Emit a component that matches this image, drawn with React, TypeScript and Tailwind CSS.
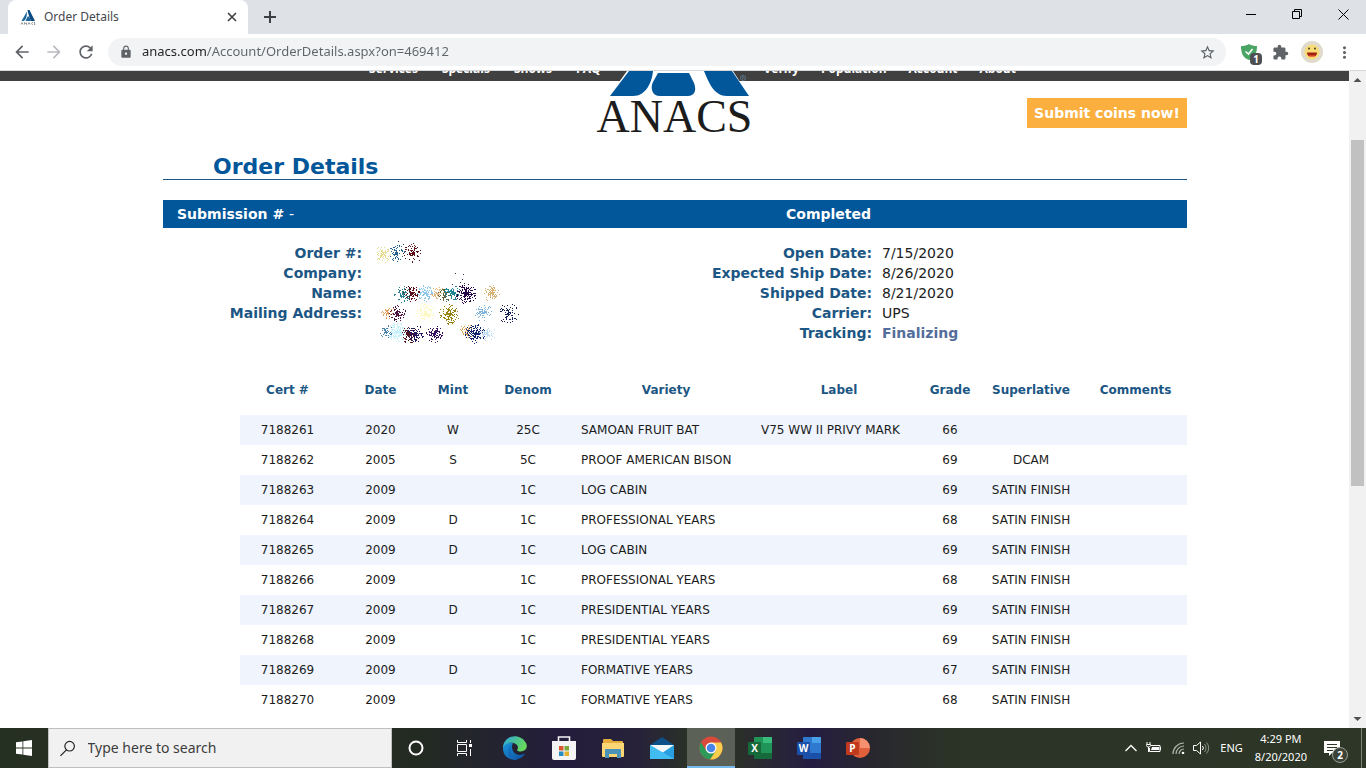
import type { ReactNode } from "react";
import {
  MdArrowBack,
  MdArrowForward,
  MdExtension,
  MdLock,
  MdMoreVert,
  MdRefresh,
  MdStarBorder,
} from "react-icons/md";

type Coin = {
  cert: string;
  date: string;
  mint: string;
  denom: string;
  variety: string;
  label: string;
  grade: string;
  superlative: string;
};

const coins: Coin[] = [
  { cert: "7188261", date: "2020", mint: "W", denom: "25C", variety: "SAMOAN FRUIT BAT", label: "V75 WW II PRIVY MARK", grade: "66", superlative: "" },
  { cert: "7188262", date: "2005", mint: "S", denom: "5C", variety: "PROOF AMERICAN BISON", label: "", grade: "69", superlative: "DCAM" },
  { cert: "7188263", date: "2009", mint: "", denom: "1C", variety: "LOG CABIN", label: "", grade: "69", superlative: "SATIN FINISH" },
  { cert: "7188264", date: "2009", mint: "D", denom: "1C", variety: "PROFESSIONAL YEARS", label: "", grade: "68", superlative: "SATIN FINISH" },
  { cert: "7188265", date: "2009", mint: "D", denom: "1C", variety: "LOG CABIN", label: "", grade: "69", superlative: "SATIN FINISH" },
  { cert: "7188266", date: "2009", mint: "", denom: "1C", variety: "PROFESSIONAL YEARS", label: "", grade: "68", superlative: "SATIN FINISH" },
  { cert: "7188267", date: "2009", mint: "D", denom: "1C", variety: "PRESIDENTIAL YEARS", label: "", grade: "69", superlative: "SATIN FINISH" },
  { cert: "7188268", date: "2009", mint: "", denom: "1C", variety: "PRESIDENTIAL YEARS", label: "", grade: "69", superlative: "SATIN FINISH" },
  { cert: "7188269", date: "2009", mint: "D", denom: "1C", variety: "FORMATIVE YEARS", label: "", grade: "67", superlative: "SATIN FINISH" },
  { cert: "7188270", date: "2009", mint: "", denom: "1C", variety: "FORMATIVE YEARS", label: "", grade: "68", superlative: "SATIN FINISH" },
];

const columns = [
  { name: "Cert #", width: "w-[95px]" },
  { name: "Date", width: "w-[91px]" },
  { name: "Mint", width: "w-[54px]" },
  { name: "Denom", width: "w-[96px]" },
  { name: "Variety", width: "w-[180px]" },
  { name: "Label", width: "w-[166px]" },
  { name: "Grade", width: "w-[56px]" },
  { name: "Superlative", width: "w-[106px]" },
  { name: "Comments", width: "w-auto" },
];

const shipping = [
  { label: "Open Date:", value: "7/15/2020" },
  { label: "Expected Ship Date:", value: "8/26/2020" },
  { label: "Shipped Date:", value: "8/21/2020" },
  { label: "Carrier:", value: "UPS" },
];

// x, y, spread, dots, colour
const sprays: [number, number, number, number, string][] = [
  [12, 14, 5, 80, "#e6dc94"],
  [26, 13, 5, 80, "#245f8f"],
  [42, 13, 6, 90, "#5c1018"],
  [55, 73, 6, 160, "#fdf9c4"],
  [27, 92, 6, 200, "#c4f0fb"],
  [32, 54, 5, 80, "#2b8090"],
  [41, 53, 5, 90, "#5a1018"],
  [55, 53, 5, 100, "#8cc8ec"],
  [67, 53, 4, 50, "#e0b67c"],
  [74, 55, 4, 60, "#60603a"],
  [82, 53, 5, 110, "#1f8696"],
  [96, 53, 6, 160, "#2a0648"],
  [121, 53, 5, 100, "#d6b272"],
  [17, 72, 4, 50, "#e0a060"],
  [27, 73, 5, 90, "#4c1440"],
  [79, 74, 6, 150, "#978410"],
  [113, 72, 5, 80, "#7fb4e0"],
  [138, 73, 6, 80, "#142058"],
  [16, 91, 4, 50, "#4a84a8"],
  [39, 94, 5, 110, "#541420"],
  [45, 93, 5, 100, "#201860"],
  [64, 94, 5, 110, "#38105c"],
  [97, 90, 4, 50, "#dca450"],
  [105, 93, 6, 160, "#10246c"],
  [117, 93, 5, 70, "#bcdcf6"],
];

const sprayPaths = (() => {
  let seed = 7;
  const next = () => {
    seed = (seed * 16807) % 2147483647;
    return seed / 2147483647;
  };
  return sprays.map(([x, y, spread, dots, color]) => {
    let d = "";
    for (let i = 0; i < dots; i++) {
      const angle = next() * Math.PI * 2;
      const r = Math.pow(next(), 1.2) * spread * 1.7;
      const px = Math.round(x + Math.cos(angle) * r);
      const py = Math.round(y + Math.sin(angle) * r);
      d += `M${px} ${py}h1v1h-1z`;
    }
    return { d, color };
  });
})();

function RedactedDetails() {
  return (
    <svg width="150" height="105" viewBox="0 0 150 105" shapeRendering="crispEdges" aria-hidden="true">
      {sprayPaths.map((s, i) => (
        <path key={i} d={s.d} fill={s.color} />
      ))}
      <path
        d="M28 1h1v1h-1zM33 4h1v1h-1zM38 6h1v1h-1zM85 33h1v1h-1zM93 34h1v1h-1zM92 39h1v1h-1zM90 42h1v1h-1zM94 43h1v1h-1zM82 44h1v1h-1z"
        fill="#3b2a4e"
      />
    </svg>
  );
}

function Favicon() {
  return (
    <svg width="16" height="16" viewBox="0 0 16 16" aria-hidden="true">
      <path d="M7.500 1h2L15 12h-4C9.500 9 8.800 6 8 3.500z" fill="#0a4a80" />
      <path d="M7 2.500C7 6 6.500 11 3.500 12H1.500zM7.600 7.500h1.600L11 12H5.500z" fill="#1c679c" />
      <path d="M1 15.500l1-2 1 2M4.500 15.500v-2l2 2v-2M8 15.500l1-2 1 2M13 13.500c-2 0-2 2 0 2M15 13.500h-1l1 2h-1" stroke="#6b7478" strokeWidth=".7" fill="none" />
    </svg>
  );
}

function Logo() {
  return (
    <a href="#home" aria-label="ANACS home" className="absolute left-1/2 top-0 flex w-[170px] -translate-x-1/2 flex-col items-center">
      <svg width="170" height="26" viewBox="0 0 170 26" aria-hidden="true">
        <path d="M37 0H143L159 25H19z" fill="#fff" />
        <path d="M39 0H63C62 11 56 25 43 25H20z" fill="#02569a" />
        <path d="M68 2H99L104 12C107 20 104 25 98 25H70C62 25 60 17 63 11z" fill="#02569a" />
        <path d="M114 0H142L159 25H137C124 25 119 12 114 0z" fill="#02569a" />
        <circle cx="153" cy="7" r="2.500" fill="none" stroke="#5d7386" />
        <path d="M152.500 8.500v-3h1v1.500l1 1.500" fill="none" stroke="#5d7386" strokeWidth=".6" />
      </svg>
      <span className="font-['Liberation_Serif',serif] text-[46px] leading-10 text-[#1c1c1c]">ANACS</span>
    </a>
  );
}

function BrowserChrome() {
  return (
    <header className="font-['Noto_Sans',sans-serif]">
      <div className="flex h-[34px] bg-[#dee1e6] pl-2">
        <div className="flex w-60 items-center rounded-t-lg bg-white pl-3 pr-2.5">
          <Favicon />
          <span className="ml-2 flex-1 text-xs text-[#45484c]">Order Details</span>
          <button aria-label="Close tab" className="p-px">
            <svg width="10" height="10" viewBox="0 0 10 10" stroke="#3c4043" strokeWidth="1.600">
              <path d="M1 1l8 8M9 1l-8 8" />
            </svg>
          </button>
        </div>
        <button aria-label="New tab" className="ml-4 text-[#3c4043]">
          <svg width="12" height="12" viewBox="0 0 12 12" stroke="currentColor" strokeWidth="2">
            <path d="M6 0v12M0 6h12" />
          </svg>
        </button>
        <div className="ml-auto flex h-7 items-center text-black">
          <button aria-label="Minimize" className="flex w-[46px] justify-center">
            <svg width="10" height="10" viewBox="0 0 10 10" stroke="currentColor" shapeRendering="crispEdges">
              <path d="M0 5.500h10" />
            </svg>
          </button>
          <button aria-label="Restore" className="flex w-[46px] justify-center">
            <svg width="10" height="10" viewBox="0 0 10 10" fill="none" stroke="currentColor">
              <path d="M.5 2.500h7v7h-7zM2.500 2.500v-2h7v7h-2" />
            </svg>
          </button>
          <button aria-label="Close" className="flex w-[46px] justify-center">
            <svg width="11" height="11" viewBox="0 0 11 11" stroke="currentColor">
              <path d="M.5.5l10 10M10.500.5l-10 10" />
            </svg>
          </button>
        </div>
      </div>
      <div className="flex h-[37px] items-center border-b border-[#d5d8db] bg-white pl-3 pr-3 text-[#5f6368]">
        <button aria-label="Back">
          <MdArrowBack size={20} />
        </button>
        <button aria-label="Forward" className="ml-3 text-[#b9bbbe]">
          <MdArrowForward size={20} />
        </button>
        <button aria-label="Reload" className="ml-3">
          <MdRefresh size={20} />
        </button>
        <div className="ml-3 flex h-7 flex-1 items-center rounded-full bg-[#f1f3f4] pl-[11px] pr-2.5">
          <MdLock size={14} />
          <input
            aria-label="Address"
            defaultValue="anacs.com/Account/OrderDetails.aspx?on=469412"
            className="ml-[9px] flex-1 bg-[linear-gradient(to_right,#202124_64px,#5f6368_64px)] bg-clip-text text-[13px] text-transparent outline-none"
          />
          <button aria-label="Bookmark">
            <MdStarBorder size={17} />
          </button>
        </div>
        <button aria-label="Protection" className="relative ml-[15px]">
          <svg width="16" height="18" viewBox="0 0 16 18">
            <path d="M8 1C5.500 2.500 3 3 0 3c0 7 2 12 8 14 6-2 8-7 8-14-3 0-5.500-.5-8-2z" fill="#4aa564" />
            <path d="M4.500 8.500L7.500 11l4-5" fill="none" stroke="#fff" strokeWidth="1.600" />
          </svg>
          <span className="absolute left-[9px] top-[10px] h-3 w-3 rounded-sm bg-[#4d4f52] text-center text-[10px] font-bold leading-3 text-white">1</span>
        </button>
        <button aria-label="Extensions" className="ml-[15px]">
          <MdExtension size={17} />
        </button>
        <button aria-label="Profile" className="ml-3">
          <svg width="22" height="22" viewBox="0 0 22 22">
            <circle cx="11" cy="11" r="11" fill="#dfdacd" />
            <circle cx="11" cy="11" r="7.500" fill="#f7dc78" />
            <path d="M6 11.500h10c0 6-10 6-10 0z" fill="#a51e12" />
            <path d="M8 14.500h6l-1 1.500H9z" fill="#ef6a3c" />
            <circle cx="8" cy="7.500" r="1" fill="#4a3a1c" />
            <circle cx="14" cy="7.500" r="1" fill="#4a3a1c" />
          </svg>
        </button>
        <button aria-label="Menu" className="ml-3">
          <MdMoreVert size={19} />
        </button>
      </div>
    </header>
  );
}

function Scrollbar() {
  return (
    <div className="flex w-[17px] shrink-0 flex-col items-center bg-[#f1f1f1]" aria-hidden="true">
      <svg width="17" height="17" viewBox="0 0 17 17">
        <path d="M4.500 11h8l-4-4z" fill="#505050" />
      </svg>
      <div className="grow-[52]" />
      <div className="w-[13px] grow-[346] bg-[#c1c1c1]" />
      <div className="grow-[225]" />
      <svg width="17" height="17" viewBox="0 0 17 17">
        <path d="M4.500 6h8l-4 4z" fill="#505050" />
      </svg>
    </div>
  );
}

function OrderPage() {
  return (
    <main className="relative flex-1 overflow-hidden bg-white">
      {/* page is scrolled down, only the bottom of the menu stays in view */}
      <nav className="-mt-[30px] flex h-10 justify-center bg-[#404040] pl-9 pt-4 font-['Open_Sans',sans-serif] text-xs font-bold leading-5 text-white">
        <div className="flex items-center gap-6">
          <a href="#services">Services</a>
          <a href="#specials">Specials</a>
          <a href="#shows">Shows</a>
          <a href="#faq">FAQ</a>
        </div>
        <div className="w-[163px]" />
        <div className="flex items-center gap-[22px]">
          <a href="#verify">Verify</a>
          <a href="#population">Population</a>
          <a href="#account">Account</a>
          <a href="#about">About</a>
        </div>
      </nav>
      <Logo />

      <div className="pl-px font-['DejaVu_Sans',sans-serif]">
        <div className="mx-auto max-w-[1024px]">
          <div className="flex justify-end pt-[17px]">
            <button className="h-[30px] w-40 bg-[#fbaf3f] text-sm font-bold text-white">Submit coins now!</button>
          </div>
          <h1 className="mt-[26px] border-b border-[#1d5683] pl-[50px] text-[22px] font-bold leading-[25px] text-[#02569a]">Order Details</h1>

          <section className="mt-5 text-sm">
            <div className="flex h-7 items-center bg-[#02569a] pl-3.5 font-bold text-white">
              <h2 className="w-[609px]">
                Submission # <span className="font-normal">-</span>
              </h2>
              <span>Completed</span>
            </div>

            <div className="mt-[15px] flex leading-5">
              <div className="w-[199px] text-right font-bold text-[#1b5684]">
                <p>Order #:</p>
                <p>Company:</p>
                <p>Name:</p>
                <p>Mailing Address:</p>
              </div>
              <div className="-mt-[3px] ml-2 h-[103px]">
                <RedactedDetails />
              </div>
              <dl className="ml-[152px] grid h-[100px] grid-cols-[200px_auto] gap-x-2.5">
                {shipping.map((row) => (
                  <div key={row.label} className="contents">
                    <dt className="text-right font-bold text-[#1b5684]">{row.label}</dt>
                    <dd className="text-[#222]">{row.value}</dd>
                  </div>
                ))}
                <dt className="text-right font-bold text-[#1b5684]">Tracking:</dt>
                <dd>
                  <a href="#tracking" className="font-bold text-[#536e9c]">
                    Finalizing
                  </a>
                </dd>
              </dl>
            </div>
          </section>

          <div className="mt-[22px] pl-[77px]">
            <table className="w-full table-fixed text-xs text-[#1c1c1c]">
              <thead>
                <tr className="h-[50px] text-[#1b5684]">
                  {columns.map((c) => (
                    <th key={c.name} scope="col" className={`${c.width} p-0 text-center font-bold`}>
                      {c.name}
                    </th>
                  ))}
                </tr>
              </thead>
              <tbody className="text-center">
                {coins.map((coin) => (
                  <tr key={coin.cert} className="h-[30px] odd:bg-[#eff4fd]">
                    <td>{coin.cert}</td>
                    <td>{coin.date}</td>
                    <td>{coin.mint}</td>
                    <td>{coin.denom}</td>
                    <td className="whitespace-nowrap pl-[5px] text-left">{coin.variety}</td>
                    <td className="whitespace-nowrap pl-[5px] text-left">{coin.label}</td>
                    <td>{coin.grade}</td>
                    <td>{coin.superlative}</td>
                    <td />
                  </tr>
                ))}
              </tbody>
            </table>
          </div>
        </div>
      </div>
    </main>
  );
}

function TaskButton({ name, active, children }: { name: string; active?: boolean; children: ReactNode }) {
  return (
    <button
      aria-label={name}
      className={`flex h-10 w-12 items-center justify-center ${active ? "border-b-2 border-[#76b9ed] bg-[#5b6157] pt-0.5" : ""}`}
    >
      {children}
    </button>
  );
}

function OfficeIcon({ letter, dark, mid, light }: { letter: string; dark: string; mid: string; light: string }) {
  return (
    <svg width="24" height="22" viewBox="0 0 24 22">
      {letter === "P" ? (
        <>
          <circle cx="14" cy="11" r="10" fill={mid} />
          <path d="M14 1a10 10 0 0 1 10 10H14z" fill={light} />
        </>
      ) : (
        <>
          <rect x="6" y="0" width="18" height="22" rx="1" fill={mid} />
          <path d="M15 0h8q1 0 1 1v5h-9z" fill={light} />
          <path d="M6 16h18v5q0 1-1 1H7q-1 0-1-1z" fill={dark} />
        </>
      )}
      <rect x="0" y="5" width="13" height="13" rx="1" fill={dark} />
      <text x="6.500" y="15" textAnchor="middle" fontSize="10" fontWeight="700" fontFamily="Open Sans, sans-serif" fill="#fff">
        {letter}
      </text>
    </svg>
  );
}

function Taskbar() {
  return (
    <footer className="flex h-10 shrink-0 items-center bg-[linear-gradient(to_right,#263022_0px,#232a22_420px,#241d3c_560px,#27223a_640px,#2a3226_690px,#2b2f2a_740px,#251d42_810px,#28272f_870px,#2b3326_950px,#2d3627_1366px)] font-['Noto_Sans',sans-serif] text-white">
      <button aria-label="Start" className="flex h-10 w-12 items-center justify-center">
        <svg width="16" height="16" viewBox="0 0 16 16" fill="#fff">
          <path d="M0 2.300L6.500 1.400V7.600H0zM7.300 1.300L16 0V7.600H7.300zM0 8.400H6.500V14.600L0 13.700zM7.300 8.400H16V16L7.300 14.700z" />
        </svg>
      </button>
      <label className="flex h-10 w-[344px] items-center border border-[#bfbfbf] bg-[#f1f1f1] pl-[11px]">
        <svg width="17" height="17" viewBox="0 0 17 17" fill="none" stroke="#222" strokeWidth="1.300">
          <circle cx="10.500" cy="6" r="5.200" />
          <path d="M7 10L.5 16.500" />
        </svg>
        <input
          aria-label="Type here to search"
          placeholder="Type here to search"
          className="ml-3 w-full bg-transparent text-sm outline-none placeholder:text-[#3c3c3c]"
        />
      </label>
      <TaskButton name="Cortana">
        <svg width="16" height="16" viewBox="0 0 16 16">
          <circle cx="8" cy="8" r="6.500" fill="none" stroke="#fff" strokeWidth="2" />
        </svg>
      </TaskButton>
      <TaskButton name="Task View">
        <svg width="17" height="16" viewBox="0 0 17 16" fill="none" stroke="#fff">
          <path d="M1.500 0v2.500h9V0M1.500 16v-2.500h9V16M1.500 4.500h9v7h-9zM14.500 0v3M14.500 9v7" />
          <path d="M13 4h3v3h-3z" fill="#fff" stroke="none" />
        </svg>
      </TaskButton>
      <div className="ml-[3px] flex gap-px">
        <TaskButton name="Microsoft Edge">
          <svg width="24" height="24" viewBox="0 0 24 24">
            <defs>
              <linearGradient id="edgeTop" x1="0" y1="0" x2="1" y2=".4">
                <stop offset="0" stopColor="#2aa5e0" />
                <stop offset="1" stopColor="#66d85c" />
              </linearGradient>
              <linearGradient id="edgeBase" x1="0" y1="0" x2="1" y2="1">
                <stop offset="0" stopColor="#1b96dc" />
                <stop offset="1" stopColor="#0d4f9c" />
              </linearGradient>
            </defs>
            <path d="M0 12C1 6 6 6 10 7c-2 3-1 9 3 11 3 1.500 6 1 9-.5C17 27 0 26 0 12z" fill="url(#edgeBase)" />
            <path d="M0 12C0-1 17-4 23 7c3 6-3 10-8 8-2-1 0-1.500 0-3.500C15 6 3 4 0 12z" fill="url(#edgeTop)" />
            <path d="M10 8c-5 4-3 13 4 16-8 1-12-11-4-16z" fill="#1467b4" />
          </svg>
        </TaskButton>
        <TaskButton name="Microsoft Store">
          <svg width="24" height="24" viewBox="0 0 24 24">
            <path d="M6.500 6V1h11v5" fill="none" stroke="#f4f4f4" strokeWidth="1.600" />
            <path d="M0 5h24v17q0 2-2 2H2q-2 0-2-2z" fill="#f4f4f4" />
            <path d="M7 10h4.500v4.500H7z" fill="#d8572e" />
            <path d="M12.500 10H17v4.500h-4.500z" fill="#79a83a" />
            <path d="M7 15.500h4.500V20H7z" fill="#288cc4" />
            <path d="M12.500 15.500H17V20h-4.500z" fill="#e5b12c" />
          </svg>
        </TaskButton>
        <TaskButton name="File Explorer">
          <svg width="22" height="20" viewBox="0 0 22 20">
            <path d="M1 2q0-1 1-1h7l2 2h9q1 0 1 1v15H1z" fill="#e4ad3c" />
            <path d="M0 5h22v13q0 1-1 1H1q-1 0-1-1z" fill="#fcd675" />
            <path d="M4 11h14q1 0 1 1v8h-4v-4H7v4H3v-8q0-1 1-1z" fill="#4a92b8" />
          </svg>
        </TaskButton>
        <TaskButton name="Mail">
          <svg width="24" height="22" viewBox="0 0 24 22">
            <path d="M0 8L12 0l12 8v4H0z" fill="#0d4f88" />
            <path d="M0 8h24v14H0z" fill="#2a9fe0" />
            <path d="M0 8h24L12 16z" fill="#f2f7fa" />
            <path d="M0 8l24 14H0z" fill="#42bdf2" />
          </svg>
        </TaskButton>
        <TaskButton name="Google Chrome" active>
          <svg width="24" height="24" viewBox="0 0 24 24">
            <circle cx="12" cy="12" r="11.500" fill="#d84a3c" />
            <path d="M2 6.200A11.500 11.500 0 0 0 11.200 23.500L17 14.800 7 14.500z" fill="#2e9a57" />
            <path d="M11.200 23.500A11.500 11.500 0 0 0 22.100 6.600H12L17.200 14z" fill="#f8cf4a" />
            <circle cx="12" cy="12" r="5.500" fill="#fff" />
            <circle cx="12" cy="12" r="4.300" fill="#4a84e8" />
          </svg>
        </TaskButton>
        <TaskButton name="Excel">
          <OfficeIcon letter="X" dark="#16693a" mid="#1f9557" light="#38bc7c" />
        </TaskButton>
        <TaskButton name="Word">
          <OfficeIcon letter="W" dark="#1b50a8" mid="#2f78d0" light="#48a0ea" />
        </TaskButton>
        <TaskButton name="PowerPoint">
          <OfficeIcon letter="P" dark="#c23a1e" mid="#e0603c" light="#f59070" />
        </TaskButton>
      </div>

      <div className="ml-auto flex h-10 items-center text-[11px]">
        <button aria-label="Show hidden icons">
          <svg width="12" height="8" viewBox="0 0 12 8" fill="none" stroke="#fff" strokeWidth="1.300">
            <path d="M.5 7L6 1.500 11.500 7" />
          </svg>
        </button>
        <button aria-label="Battery" className="ml-[9px]">
          <svg width="16" height="12" viewBox="0 0 16 12" fill="none" stroke="#fff">
            <path d="M5 3.500h9v6H3.500V6M14.500 5v3M1 0v2M4 0v2M.5 2.500h4v1L3.500 5h-2L.5 3.500zM2.500 5v5" />
            <path d="M6 5h7v3H5z" fill="#fff" stroke="none" />
          </svg>
        </button>
        <button aria-label="Wi-Fi" className="ml-2.5">
          <svg width="13" height="12" viewBox="0 0 13 12" fill="none" stroke="#aeb3a9" strokeWidth="1.200">
            <path d="M1 12A11 11 0 0 1 12 1M4 12a8 8 0 0 1 8-8M7 12a5 5 0 0 1 5-5" />
            <circle cx="11" cy="11" r="1.300" fill="#fff" stroke="none" />
          </svg>
        </button>
        <button aria-label="Volume" className="ml-2">
          <svg width="17" height="14" viewBox="0 0 17 14" fill="none" stroke="#fff">
            <path d="M.5 4.500h3l4-3.500v12l-4-3.500h-3zM9.500 5a3 3 0 0 1 0 4" />
            <path d="M11.500 3a6 6 0 0 1 0 8M13.500 1.500a8 8 0 0 1 0 11" stroke="#8d9488" />
          </svg>
        </button>
        <button className="ml-2.5">ENG</button>
        <button className="ml-3 text-center leading-[18px]">
          <span className="block">4:29 PM</span>
          <span className="block">8/20/2020</span>
        </button>
        <button aria-label="Notifications" className="relative ml-[17px] mr-5">
          <svg width="17" height="17" viewBox="0 0 17 17">
            <path d="M0 1h16v12H8l-3 3v-3H0z" fill="#fff" />
            <path d="M3 4.500h10M3 7.500h10M3 10.500h6" stroke="#2d3627" />
          </svg>
          <span className="absolute left-2 top-[7px] h-4 w-4 rounded-full border border-[#9a9f96] bg-[#3b4238] text-center text-[10px] font-bold leading-[14px]">2</span>
        </button>
        <div className="mr-1 h-10 w-px bg-[#7b8275]" />
      </div>
    </footer>
  );
}

export default function App() {
  return (
    <div className="flex h-screen flex-col overflow-hidden">
      <BrowserChrome />
      <div className="flex min-h-0 flex-1">
        <OrderPage />
        <Scrollbar />
      </div>
      <Taskbar />
    </div>
  );
}
